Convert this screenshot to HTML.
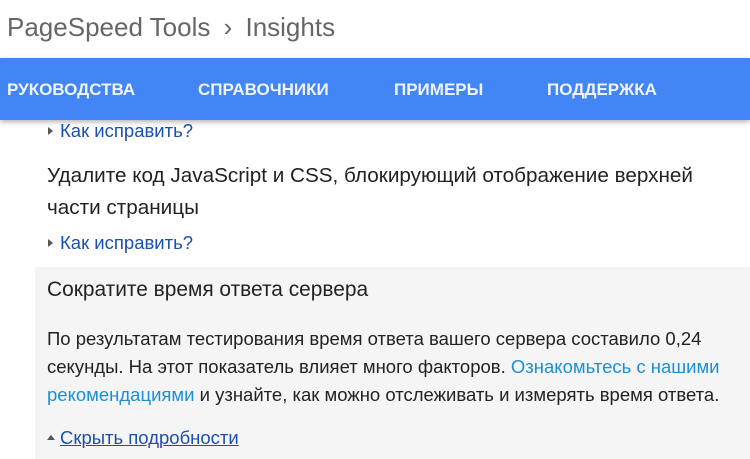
<!DOCTYPE html>
<html><head><meta charset="utf-8"><style>
html,body{margin:0;padding:0;width:750px;height:459px;overflow:hidden;background:#fff;font-family:"Liberation Sans",Arial,sans-serif;position:relative}
.l{position:absolute;white-space:nowrap;transform-origin:0 0;line-height:1}
.bar{position:absolute;left:0;top:58px;width:750px;height:62px;background:#4285f4;box-shadow:0 2px 5px rgba(0,0,0,.3);z-index:2}
.nav{color:#f0f4ff;font-size:17px;font-weight:bold;top:23px}
.link{color:#1a4fb0}
.tri{position:absolute;width:0;height:0;border-top:4px solid transparent;border-bottom:4px solid transparent;border-left:5px solid #555}
.box{position:absolute;left:35px;top:267px;width:715px;height:192px;background:#f5f5f5}
</style></head><body>
<div class="l" style="left:7px;top:14px;font-size:26px;color:#666">PageSpeed Tools <span style="margin:0 6px">›</span> Insights</div>
<div class="bar">
<div class="l nav" style="left:7px">РУКОВОДСТВА</div>
<div class="l nav" style="left:198px">СПРАВОЧНИКИ</div>
<div class="l nav" style="left:394px">ПРИМЕРЫ</div>
<div class="l nav" style="left:547px">ПОДДЕРЖКА</div>
</div>
<div class="tri" style="left:48px;top:127px"></div>
<div class="l link" style="left:60px;top:122px;font-size:18.5px">Как исправить?</div>
<div class="l" style="left:47px;top:166px;font-size:20.7px;color:#222">Удалите код JavaScript и CSS, блокирующий отображение верхней</div>
<div class="l" style="left:47px;top:198px;font-size:20.7px;color:#222">части страницы</div>
<div class="tri" style="left:48px;top:239px"></div>
<div class="l link" style="left:60px;top:234px;font-size:18.5px">Как исправить?</div>
<div class="box"></div>
<div class="l" style="left:47px;top:280px;font-size:20.9px;color:#222">Сократите время ответа сервера</div>
<div class="l" style="left:47px;top:330px;font-size:18.5px;color:#222">По результатам тестирования время ответа вашего сервера составило 0,24</div>
<div class="l" style="left:47px;top:358px;font-size:18.5px;color:#222">секунды. На этот показатель влияет много факторов. <span style="color:#1a8fd6">Ознакомьтесь с нашими</span></div>
<div class="l" style="left:47px;top:386px;font-size:18.5px;color:#222"><span style="color:#1a8fd6">рекомендациями</span> и узнайте, как можно отслеживать и измерять время ответа.</div>
<div style="position:absolute;left:47px;top:435px;width:0;height:0;border-left:4px solid transparent;border-right:4px solid transparent;border-bottom:5px solid #555"></div>
<div class="l link" style="left:60px;top:429px;font-size:18.5px;text-decoration:underline">Скрыть подробности</div>
</body></html>
